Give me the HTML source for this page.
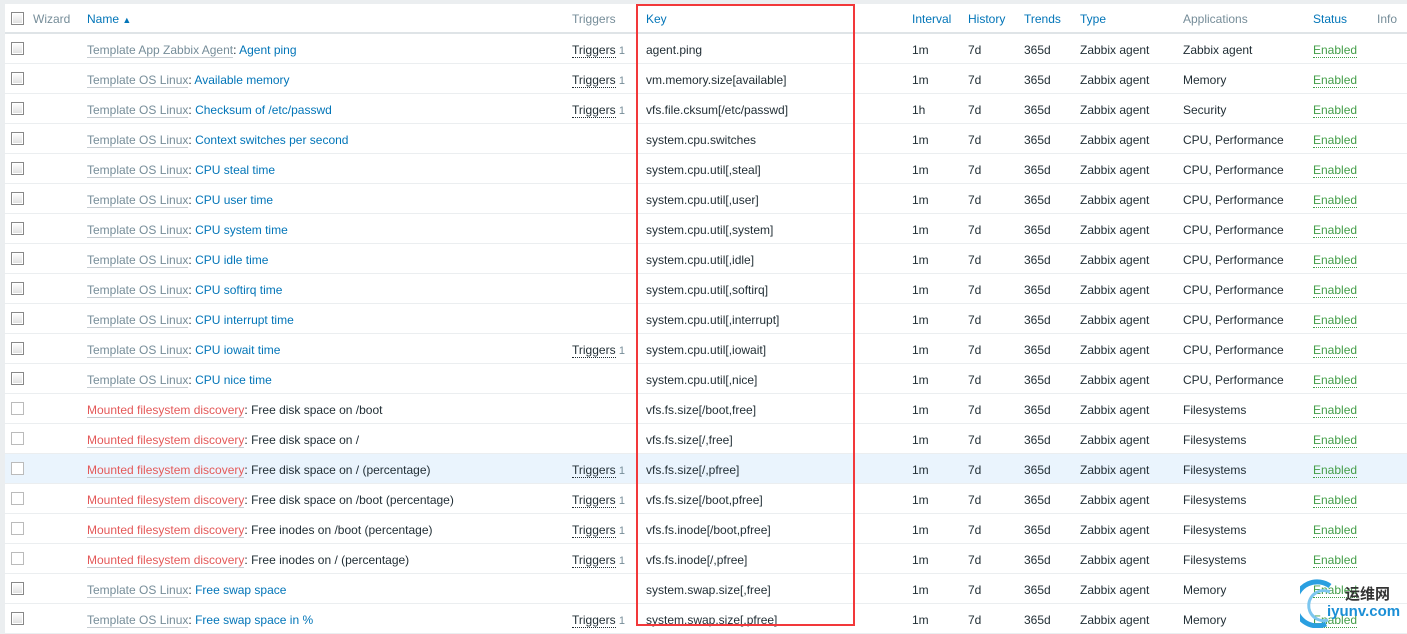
<!DOCTYPE html>
<html><head><meta charset="utf-8"><style>
body{margin:0;background:#ebeef0;width:1407px;height:628px;overflow:hidden;font-family:"Liberation Sans",Arial,sans-serif;font-size:12px;color:#1f2c33}
#t{position:absolute;left:5px;top:4px;width:1402px;height:630px;background:#fff}
.r{position:relative;height:29px;border-bottom:1px solid #ebeef0}
.h{height:28px;border-bottom:2px solid #dfe4e7}
.r span{position:absolute;top:9px;white-space:nowrap}
.h span{top:8px}
.hl{background:#eaf4fd}
.cb{position:absolute;left:6px;top:8px;width:11px;height:11px;border:1px solid #888;background:linear-gradient(#fff,#ddd);box-shadow:inset 0 0 0 1px #fff}
.cb.l{border-color:#bbb;background:#fff}
.bl{color:#0275b8}.gr{color:#768d99}
.tp{color:#768d99;border-bottom:1px solid #c6ccd1}
.rd{color:#e45959;border-bottom:1px solid #c6ccd1}
.en{color:#429e47;border-bottom:1px dotted #429e47}
.tr{border-bottom:1px dotted #1f2c33}
.n1{color:#768d99;font-size:11px}
#box{position:absolute;left:636px;top:4px;width:215px;height:618px;border:2px solid #f2383a}
</style></head><body>
<div id="t">
<div class="r h"><div class="cb"></div><span class="gr" style="left:28px">Wizard</span><span class="bl" style="left:82px">Name <span style="position:static;font-size:9px">▲</span></span><span class="gr" style="left:567px">Triggers</span><span class="bl" style="left:641px">Key</span><span class="bl" style="left:907px">Interval</span><span class="bl" style="left:963px">History</span><span class="bl" style="left:1019px">Trends</span><span class="bl" style="left:1075px">Type</span><span class="gr" style="left:1178px">Applications</span><span class="bl" style="left:1308px">Status</span><span class="gr" style="left:1372px">Info</span></div>
<div class="r"><div class="cb"></div><span style="left:82px"><span class="tp" style="position:static">Template App Zabbix Agent</span>: <span class="bl" style="position:static">Agent ping</span></span><span style="left:567px"><span class="tr" style="position:static">Triggers</span> <span class="n1" style="position:static">1</span></span><span style="left:641px">agent.ping</span><span style="left:907px">1m</span><span style="left:963px">7d</span><span style="left:1019px">365d</span><span style="left:1075px">Zabbix agent</span><span style="left:1178px">Zabbix agent</span><span class="en" style="left:1308px">Enabled</span></div>
<div class="r"><div class="cb"></div><span style="left:82px"><span class="tp" style="position:static">Template OS Linux</span>: <span class="bl" style="position:static">Available memory</span></span><span style="left:567px"><span class="tr" style="position:static">Triggers</span> <span class="n1" style="position:static">1</span></span><span style="left:641px">vm.memory.size[available]</span><span style="left:907px">1m</span><span style="left:963px">7d</span><span style="left:1019px">365d</span><span style="left:1075px">Zabbix agent</span><span style="left:1178px">Memory</span><span class="en" style="left:1308px">Enabled</span></div>
<div class="r"><div class="cb"></div><span style="left:82px"><span class="tp" style="position:static">Template OS Linux</span>: <span class="bl" style="position:static">Checksum of /etc/passwd</span></span><span style="left:567px"><span class="tr" style="position:static">Triggers</span> <span class="n1" style="position:static">1</span></span><span style="left:641px">vfs.file.cksum[/etc/passwd]</span><span style="left:907px">1h</span><span style="left:963px">7d</span><span style="left:1019px">365d</span><span style="left:1075px">Zabbix agent</span><span style="left:1178px">Security</span><span class="en" style="left:1308px">Enabled</span></div>
<div class="r"><div class="cb"></div><span style="left:82px"><span class="tp" style="position:static">Template OS Linux</span>: <span class="bl" style="position:static">Context switches per second</span></span><span style="left:641px">system.cpu.switches</span><span style="left:907px">1m</span><span style="left:963px">7d</span><span style="left:1019px">365d</span><span style="left:1075px">Zabbix agent</span><span style="left:1178px">CPU, Performance</span><span class="en" style="left:1308px">Enabled</span></div>
<div class="r"><div class="cb"></div><span style="left:82px"><span class="tp" style="position:static">Template OS Linux</span>: <span class="bl" style="position:static">CPU steal time</span></span><span style="left:641px">system.cpu.util[,steal]</span><span style="left:907px">1m</span><span style="left:963px">7d</span><span style="left:1019px">365d</span><span style="left:1075px">Zabbix agent</span><span style="left:1178px">CPU, Performance</span><span class="en" style="left:1308px">Enabled</span></div>
<div class="r"><div class="cb"></div><span style="left:82px"><span class="tp" style="position:static">Template OS Linux</span>: <span class="bl" style="position:static">CPU user time</span></span><span style="left:641px">system.cpu.util[,user]</span><span style="left:907px">1m</span><span style="left:963px">7d</span><span style="left:1019px">365d</span><span style="left:1075px">Zabbix agent</span><span style="left:1178px">CPU, Performance</span><span class="en" style="left:1308px">Enabled</span></div>
<div class="r"><div class="cb"></div><span style="left:82px"><span class="tp" style="position:static">Template OS Linux</span>: <span class="bl" style="position:static">CPU system time</span></span><span style="left:641px">system.cpu.util[,system]</span><span style="left:907px">1m</span><span style="left:963px">7d</span><span style="left:1019px">365d</span><span style="left:1075px">Zabbix agent</span><span style="left:1178px">CPU, Performance</span><span class="en" style="left:1308px">Enabled</span></div>
<div class="r"><div class="cb"></div><span style="left:82px"><span class="tp" style="position:static">Template OS Linux</span>: <span class="bl" style="position:static">CPU idle time</span></span><span style="left:641px">system.cpu.util[,idle]</span><span style="left:907px">1m</span><span style="left:963px">7d</span><span style="left:1019px">365d</span><span style="left:1075px">Zabbix agent</span><span style="left:1178px">CPU, Performance</span><span class="en" style="left:1308px">Enabled</span></div>
<div class="r"><div class="cb"></div><span style="left:82px"><span class="tp" style="position:static">Template OS Linux</span>: <span class="bl" style="position:static">CPU softirq time</span></span><span style="left:641px">system.cpu.util[,softirq]</span><span style="left:907px">1m</span><span style="left:963px">7d</span><span style="left:1019px">365d</span><span style="left:1075px">Zabbix agent</span><span style="left:1178px">CPU, Performance</span><span class="en" style="left:1308px">Enabled</span></div>
<div class="r"><div class="cb"></div><span style="left:82px"><span class="tp" style="position:static">Template OS Linux</span>: <span class="bl" style="position:static">CPU interrupt time</span></span><span style="left:641px">system.cpu.util[,interrupt]</span><span style="left:907px">1m</span><span style="left:963px">7d</span><span style="left:1019px">365d</span><span style="left:1075px">Zabbix agent</span><span style="left:1178px">CPU, Performance</span><span class="en" style="left:1308px">Enabled</span></div>
<div class="r"><div class="cb"></div><span style="left:82px"><span class="tp" style="position:static">Template OS Linux</span>: <span class="bl" style="position:static">CPU iowait time</span></span><span style="left:567px"><span class="tr" style="position:static">Triggers</span> <span class="n1" style="position:static">1</span></span><span style="left:641px">system.cpu.util[,iowait]</span><span style="left:907px">1m</span><span style="left:963px">7d</span><span style="left:1019px">365d</span><span style="left:1075px">Zabbix agent</span><span style="left:1178px">CPU, Performance</span><span class="en" style="left:1308px">Enabled</span></div>
<div class="r"><div class="cb"></div><span style="left:82px"><span class="tp" style="position:static">Template OS Linux</span>: <span class="bl" style="position:static">CPU nice time</span></span><span style="left:641px">system.cpu.util[,nice]</span><span style="left:907px">1m</span><span style="left:963px">7d</span><span style="left:1019px">365d</span><span style="left:1075px">Zabbix agent</span><span style="left:1178px">CPU, Performance</span><span class="en" style="left:1308px">Enabled</span></div>
<div class="r"><div class="cb l"></div><span style="left:82px"><span class="rd" style="position:static">Mounted filesystem discovery</span>: Free disk space on /boot</span><span style="left:641px">vfs.fs.size[/boot,free]</span><span style="left:907px">1m</span><span style="left:963px">7d</span><span style="left:1019px">365d</span><span style="left:1075px">Zabbix agent</span><span style="left:1178px">Filesystems</span><span class="en" style="left:1308px">Enabled</span></div>
<div class="r"><div class="cb l"></div><span style="left:82px"><span class="rd" style="position:static">Mounted filesystem discovery</span>: Free disk space on /</span><span style="left:641px">vfs.fs.size[/,free]</span><span style="left:907px">1m</span><span style="left:963px">7d</span><span style="left:1019px">365d</span><span style="left:1075px">Zabbix agent</span><span style="left:1178px">Filesystems</span><span class="en" style="left:1308px">Enabled</span></div>
<div class="r hl"><div class="cb l"></div><span style="left:82px"><span class="rd" style="position:static">Mounted filesystem discovery</span>: Free disk space on / (percentage)</span><span style="left:567px"><span class="tr" style="position:static">Triggers</span> <span class="n1" style="position:static">1</span></span><span style="left:641px">vfs.fs.size[/,pfree]</span><span style="left:907px">1m</span><span style="left:963px">7d</span><span style="left:1019px">365d</span><span style="left:1075px">Zabbix agent</span><span style="left:1178px">Filesystems</span><span class="en" style="left:1308px">Enabled</span></div>
<div class="r"><div class="cb l"></div><span style="left:82px"><span class="rd" style="position:static">Mounted filesystem discovery</span>: Free disk space on /boot (percentage)</span><span style="left:567px"><span class="tr" style="position:static">Triggers</span> <span class="n1" style="position:static">1</span></span><span style="left:641px">vfs.fs.size[/boot,pfree]</span><span style="left:907px">1m</span><span style="left:963px">7d</span><span style="left:1019px">365d</span><span style="left:1075px">Zabbix agent</span><span style="left:1178px">Filesystems</span><span class="en" style="left:1308px">Enabled</span></div>
<div class="r"><div class="cb l"></div><span style="left:82px"><span class="rd" style="position:static">Mounted filesystem discovery</span>: Free inodes on /boot (percentage)</span><span style="left:567px"><span class="tr" style="position:static">Triggers</span> <span class="n1" style="position:static">1</span></span><span style="left:641px">vfs.fs.inode[/boot,pfree]</span><span style="left:907px">1m</span><span style="left:963px">7d</span><span style="left:1019px">365d</span><span style="left:1075px">Zabbix agent</span><span style="left:1178px">Filesystems</span><span class="en" style="left:1308px">Enabled</span></div>
<div class="r"><div class="cb l"></div><span style="left:82px"><span class="rd" style="position:static">Mounted filesystem discovery</span>: Free inodes on / (percentage)</span><span style="left:567px"><span class="tr" style="position:static">Triggers</span> <span class="n1" style="position:static">1</span></span><span style="left:641px">vfs.fs.inode[/,pfree]</span><span style="left:907px">1m</span><span style="left:963px">7d</span><span style="left:1019px">365d</span><span style="left:1075px">Zabbix agent</span><span style="left:1178px">Filesystems</span><span class="en" style="left:1308px">Enabled</span></div>
<div class="r"><div class="cb"></div><span style="left:82px"><span class="tp" style="position:static">Template OS Linux</span>: <span class="bl" style="position:static">Free swap space</span></span><span style="left:641px">system.swap.size[,free]</span><span style="left:907px">1m</span><span style="left:963px">7d</span><span style="left:1019px">365d</span><span style="left:1075px">Zabbix agent</span><span style="left:1178px">Memory</span><span class="en" style="left:1308px">Enabled</span></div>
<div class="r"><div class="cb"></div><span style="left:82px"><span class="tp" style="position:static">Template OS Linux</span>: <span class="bl" style="position:static">Free swap space in %</span></span><span style="left:567px"><span class="tr" style="position:static">Triggers</span> <span class="n1" style="position:static">1</span></span><span style="left:641px">system.swap.size[,pfree]</span><span style="left:907px">1m</span><span style="left:963px">7d</span><span style="left:1019px">365d</span><span style="left:1075px">Zabbix agent</span><span style="left:1178px">Memory</span><span class="en" style="left:1308px">Enabled</span></div>
</div>
<div id="box"></div>
<svg style="position:absolute;left:1300px;top:578px" width="107" height="50"><path d="M30 8 A22 22 0 1 0 26 46" fill="none" stroke="#2a9fe0" stroke-width="5"/><path d="M30 14 A15 15 0 1 0 28 42" fill="none" stroke="#7cc6ef" stroke-width="3"/></svg>
<div style="position:absolute;left:1345px;top:583px;font:bold 15px 'Noto Sans CJK SC',sans-serif;color:#333">运维网</div>
<div style="position:absolute;left:1327px;top:603px;font:bold 15px 'Liberation Sans',sans-serif;color:#1b8fd6">iyunv.com</div>
</body></html>
